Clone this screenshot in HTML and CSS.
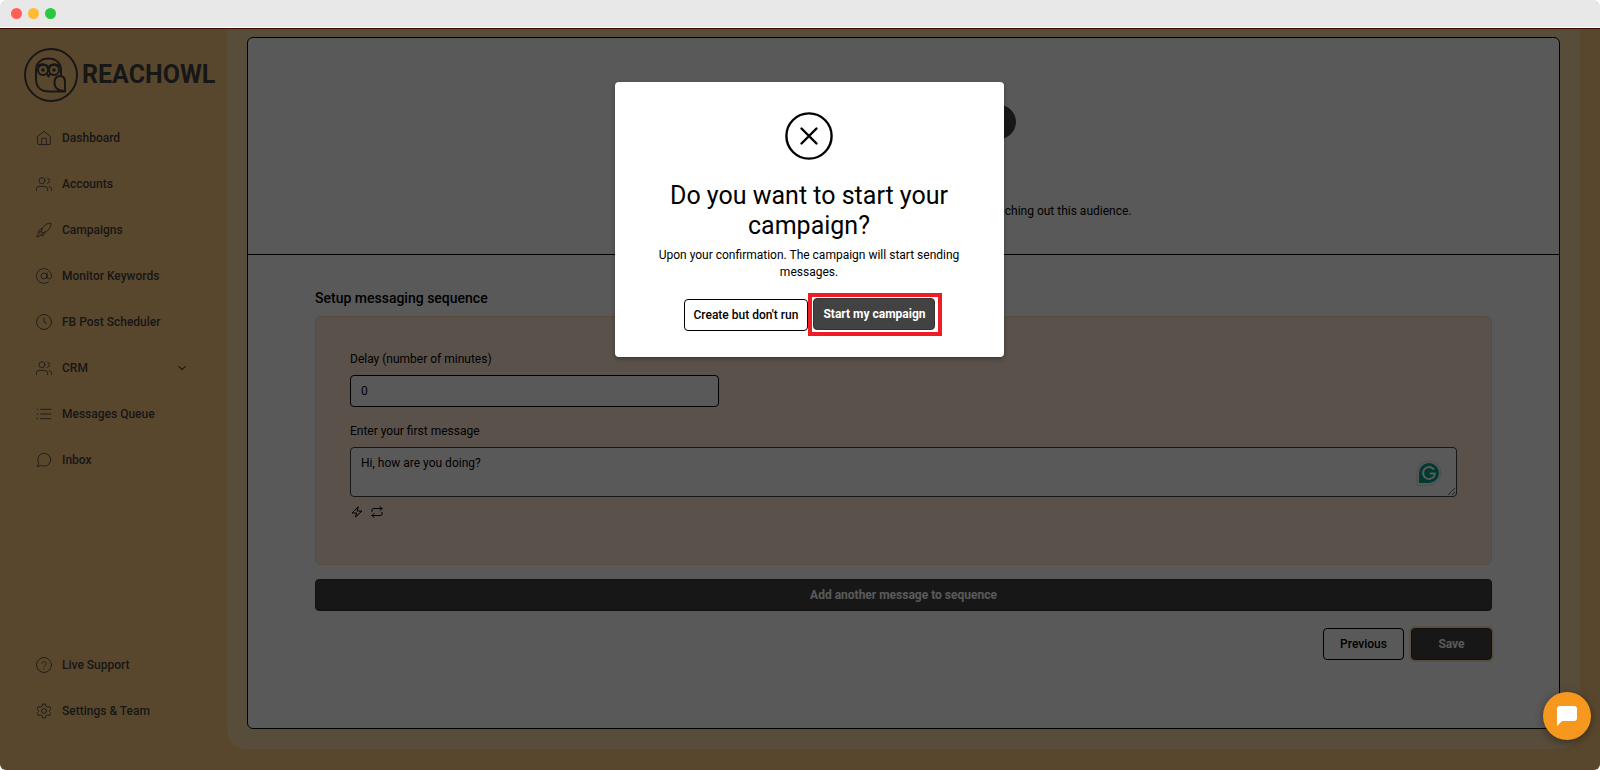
FILE: index.html
```html
<!DOCTYPE html>
<html lang="en">
<head>
    <meta charset="UTF-8">
    <meta name="viewport" content="width=device-width, initial-scale=1.0">
    <title>ReachOwl</title>
    <link rel="stylesheet" href="styles.css">
</head>
<body>
    <div class="window">
        <div class="titlebar">
            <span class="dot red"></span>
            <span class="dot yellow"></span>
            <span class="dot green"></span>
        </div>

        <div class="app">
            <aside class="sidebar">
                <a href="#" class="logo">
                    <svg viewBox="0 0 54 54" width="54" height="54">
                        <circle cx="27" cy="27" r="26"/>
                        <path d="M37 28v-6c0-7-5-11.500-12.500-11.500S12 15 12 22v9c0 8 5 12.500 13 12.500h16V34c0-4-2-6-5-6-4 0-5.500 3-5.500 7 0 5 4 8 10.500 8"/>
                        <path d="M13 18c4-2.500 9-2.500 11.500 1C27 15.500 32 15.500 36 18M23 26l1.500 2.500L26 26"/>
                        <circle cx="19" cy="22" r="5"/>
                        <circle cx="30" cy="22" r="5"/>
                        <circle cx="19" cy="22" r=".8"/>
                        <circle cx="30" cy="22" r=".8"/>
                    </svg>
                    <span>REACHOWL</span>
                </a>
                <nav class="menu">
                    <a href="#"><svg viewBox="0 0 24 24"><path d="M2.500 9.500 12 2l9.500 7.500V20a2 2 0 0 1-2 2h-15a2 2 0 0 1-2-2zM8.500 22v-8.500a1 1 0 0 1 1-1h5a1 1 0 0 1 1 1V22"/></svg>Dashboard</a>
                    <a href="#"><svg viewBox="0 0 24 24"><circle cx="9" cy="7" r="4.500"/><path d="M.5 22v-2a4.500 4.500 0 0 1 4.500-4.500h8a4.500 4.500 0 0 1 4.500 4.500v2M17 2.700a4.500 4.500 0 0 1 0 8.600M20 15.700a4.500 4.500 0 0 1 3.500 4.300v2"/></svg>Accounts</a>
                    <a href="#"><svg viewBox="0 0 24 24"><path d="M8 13.500C10 6 15 2 22.500 1.500 22.500 9 18 14 10.500 16zM9 10.500c-3-.5-5 1.500-6 5l5-1M13.500 15c.5 3-1.500 5-5 6l1-5M5 17c-2.500 1-3 3-3.500 5.500C4 22 6 21.500 7 19"/></svg>Campaigns</a>
                    <a href="#"><svg viewBox="0 0 24 24"><circle cx="12" cy="12" r="4.500"/><path d="M16.500 7.500v5.500a3.300 3.300 0 0 0 6.600 0v-1a11.200 11.200 0 1 0-4.400 8.900"/></svg>Monitor Keywords</a>
                    <a href="#"><svg viewBox="0 0 24 24"><circle cx="12" cy="12" r="11.200"/><path d="M12 5.500V12l4 2"/></svg>FB Post Scheduler</a>
                    <a href="#"><svg viewBox="0 0 24 24"><circle cx="9" cy="7" r="4.500"/><path d="M.5 22v-2a4.500 4.500 0 0 1 4.500-4.500h8a4.500 4.500 0 0 1 4.500 4.500v2M17 2.700a4.500 4.500 0 0 1 0 8.600M20 15.700a4.500 4.500 0 0 1 3.500 4.300v2"/></svg>CRM<svg class="chevron" viewBox="0 0 24 24"><path d="m4 8 8 8 8-8"/></svg></a>
                    <a href="#"><svg viewBox="0 0 24 24"><path d="M7 5h15.500M7 12h15.500M7 19h15.500M1.500 5h1M1.500 12h1M1.500 19h1"/></svg>Messages Queue</a>
                    <a href="#"><svg viewBox="0 0 24 24"><path d="M22 11.500a9.600 9.600 0 0 1-14 8.700L2 22l1.900-5.800A9.600 9.600 0 0 1 12.500 2 9.600 9.600 0 0 1 22 11.500z"/></svg>Inbox</a>
                </nav>
                <nav class="menu menu-bottom">
                    <a href="#"><svg viewBox="0 0 24 24"><circle cx="12" cy="12" r="11.200"/><path d="M8.800 9a3.300 3.300 0 0 1 6.400 1c0 2.200-3.200 2.800-3.200 4.500M12 17.500v.5"/></svg>Live Support</a>
                    <a href="#"><svg viewBox="0 0 24 24"><circle cx="12" cy="12" r="3.600"/><path d="M10 1.500h4l.8 3.200 2.400 1.400 3.200-.9 2 3.500L20 11v2l2.400 2.300-2 3.500-3.200-.9-2.400 1.400-.8 3.200h-4l-.8-3.200-2.400-1.400-3.200.9-2-3.500L4 13v-2L1.600 8.700l2-3.500 3.200.9 2.400-1.400z"/></svg>Settings &amp; Team</a>
                </nav>
            </aside>

            <main class="panel">
                <div class="card">
                    <section class="intro">
                        <div class="steps">
                            <span class="step"></span>
                            <span class="step"></span>
                        </div>
                        <p>reaching out this audience.</p>
                    </section>

                    <form class="sequence">
                        <h2>Setup messaging sequence</h2>
                        <div class="message-box">
                            <label for="delay">Delay (number of minutes)</label>
                            <input type="text" id="delay" value="0">
                            <label for="message">Enter your first message</label>
                            <div class="message-field">
                                <textarea id="message" spellcheck="false">Hi, how are you doing?</textarea>
                                <svg class="grammar" viewBox="0 0 26 26" width="26" height="26">
                                    <path class="bubble" d="M1 25V13A12 12 0 1 1 13 25z"/>
                                    <path class="badge" d="M3 23V13a10 10 0 1 1 10 10z"/>
                                    <path class="mark" d="M17.500 9A6 6 0 1 0 19 13.500h-4.500"/>
                                </svg>
                            </div>
                            <div class="tools">
                                <button type="button" aria-label="Variables"><svg viewBox="0 0 24 24"><path d="M14 2 2 14h9l-2 8L22 10h-9z"/></svg></button>
                                <button type="button" aria-label="Spintax"><svg viewBox="0 0 24 24"><path d="m18 1 4 4-4 4M2 11V8a3 3 0 0 1 3-3h17M6 23l-4-4 4-4M22 13v3a3 3 0 0 1-3 3H2"/></svg></button>
                            </div>
                        </div>
                        <button type="button" class="btn dark wide">Add another message to sequence</button>
                        <div class="actions">
                            <button type="button" class="btn light">Previous</button>
                            <button type="button" class="btn dark focused">Save</button>
                        </div>
                    </form>
                </div>
            </main>

            <div class="overlay">
                <div class="modal" role="dialog" aria-labelledby="modalTitle">
                    <svg class="modal-icon" viewBox="0 0 48 48" width="48" height="48">
                        <circle cx="24" cy="24" r="22.600"/>
                        <path d="m16.500 16.500 15 15M31.500 16.500l-15 15"/>
                    </svg>
                    <h1 id="modalTitle">Do you want to start your campaign?</h1>
                    <p>Upon your confirmation. The campaign will start sending messages.</p>
                    <div class="modal-buttons">
                        <button type="button" class="btn light">Create but don't run</button>
                        <div class="highlight">
                            <button type="button" class="btn dark">Start my campaign</button>
                        </div>
                    </div>
                </div>
            </div>

            <button type="button" class="chat" aria-label="Open chat">
                <svg viewBox="0 0 24 24" width="24" height="24"><path d="M5 2h14a3 3 0 0 1 3 3v9a3 3 0 0 1-3 3H7l-5 5V5a3 3 0 0 1 3-3z"/></svg>
            </button>
        </div>
    </div>
</body>
</html>
```
FILE: styles.css
```css
* {
    box-sizing: border-box;
}
body {
    margin: 0;
    background: #fff;
    font-family: Roboto, "Liberation Sans", sans-serif;
    font-size: 12px;
    color: #000;
}
h1, h2, p {
    margin: 0;
    font-weight: 400;
}
a {
    color: inherit;
    text-decoration: none;
}
svg {
    fill: none;
    stroke: currentColor;
    stroke-linecap: round;
    stroke-linejoin: round;
}
button, input, textarea {
    font: inherit;
    color: inherit;
}
.window {
    display: flex;
    flex-direction: column;
    min-height: 100vh;
    border-radius: 6px;
    overflow: hidden;
}
.titlebar {
    display: flex;
    align-items: center;
    gap: 6px;
    height: 28px;
    padding-left: 11px;
    background: #e8e8e8;
    border-bottom: 1px solid #fff;
}
.dot {
    width: 11px;
    height: 11px;
    border-radius: 50%;
}
.red {
    background: #ff5f57;
}
.yellow {
    background: #febc2e;
}
.green {
    background: #28c840;
}

.app {
    position: relative;
    display: flex;
    flex: 1;
    padding-right: 20px;
    background: #ffcc80;
    border-top: 1px solid #400a00;
}
.sidebar {
    display: flex;
    flex-direction: column;
    width: 227px;
    padding-bottom: 36px;
    color: #424242;
}
.logo {
    display: flex;
    align-items: center;
    gap: 4px;
    padding: 19px 0 0 24px;
    font-size: 25px;
    line-height: 28px;
    font-weight: 700;
}
.logo svg {
    stroke-width: 2;
}
.menu {
    display: flex;
    flex-direction: column;
    padding: 13px 40px 0 36px;
}
.menu a {
    display: flex;
    align-items: center;
    gap: 10px;
    height: 46px;
    font-weight: 500;
}
.menu svg {
    width: 16px;
    height: 16px;
    stroke-width: 1.3;
}
.menu .chevron {
    width: 10px;
    height: 10px;
    margin-left: auto;
    stroke-width: 2.5;
}
.menu-bottom {
    margin-top: auto;
}

.panel {
    flex: 1;
    display: flex;
    margin-bottom: 21px;
    padding: 8px 20px 20px;
    background: #fbd9a8;
    border-radius: 0 0 20px 20px;
}
.card {
    flex: 1;
    background: #fff;
    border: 1px solid #000;
    border-radius: 6px;
}
.intro {
    display: flex;
    flex-direction: column;
    align-items: center;
    height: 217px;
    padding-top: 67px;
    border-bottom: 1px solid #000;
}
.steps {
    display: flex;
    gap: 156px;
}
.step {
    width: 34px;
    height: 34px;
    border-radius: 50%;
    background: #424242;
}
.intro p {
    width: 456px;
    margin-top: 65px;
    text-align: right;
}
.sequence {
    padding: 35px 67px 0;
}
h2 {
    font-size: 14px;
    line-height: 16px;
    font-weight: 500;
}
.message-box {
    display: flex;
    flex-direction: column;
    height: 249px;
    margin: 10px 0 14px;
    padding: 34px;
    background: #ffe8d4;
    border: 1px solid #ffd9a8;
    border-radius: 6px;
}
label {
    margin-bottom: 8px;
    line-height: 16px;
}
.message-box input {
    width: 369px;
    height: 32px;
    margin-bottom: 16px;
    padding: 0 10px;
    background: #fff;
    border: 1px solid #000;
    border-radius: 4px;
}
.message-field {
    position: relative;
    display: flex;
}
textarea {
    flex: 1;
    height: 50px;
    padding: 8px 10px;
    background: #fff;
    border: 1px solid #424242;
    border-radius: 4px;
}
/* grammar badge floats over the textarea */
.grammar {
    position: absolute;
    right: 15px;
    top: 13px;
}
.bubble {
    stroke: #ddd;
    fill: #fff;
}
.badge {
    fill: #00a389;
    stroke: none;
}
.mark {
    stroke: #fff;
    stroke-width: 2;
}
.tools {
    display: flex;
    gap: 8px;
    margin-top: 9px;
    padding-left: 1px;
}
.tools button {
    display: flex;
    padding: 0;
    border: 0;
    background: none;
}
.tools svg {
    width: 12px;
    height: 12px;
    stroke-width: 2;
}

.btn {
    height: 32px;
    padding: 0 10px;
    border: 1px solid #000;
    border-radius: 4px;
    font-weight: 500;
    white-space: nowrap;
    cursor: pointer;
}
.light {
    background: #fff;
}
.dark {
    background: #424242;
    border-color: #333;
    color: #fff;
    font-weight: 700;
}
.wide {
    width: 100%;
    display: block;
}
.actions {
    display: flex;
    justify-content: flex-end;
    gap: 7px;
    margin-top: 17px;
}
.actions .btn {
    width: 81px;
}
.focused {
    box-shadow: 0 0 0 2px #ffdfb5;
}

.overlay {
    position: absolute;
    inset: 0;
    display: flex;
    justify-content: center;
    align-items: flex-start;
    padding: 53px 0 0 18px;
    background: rgba(0, 0, 0, 0.65);
}
.modal {
    width: 389px;
    padding: 30px 40px 21px;
    background: #fff;
    border-radius: 4px;
    text-align: center;
    box-shadow: 0 2px 4px rgba(0, 0, 0, 0.3);
}
.modal-icon {
    display: block;
    margin: 0 auto 21px;
    stroke-width: 2.4;
}
.modal h1 {
    font-size: 25px;
    line-height: 30px;
}
.modal p {
    margin: 6px 0 12px;
    line-height: 17px;
}
.modal-buttons {
    display: flex;
    justify-content: center;
    align-items: center;
    padding-left: 8px;
}
.modal-buttons .btn {
    padding: 0 9px;
}
.highlight {
    padding: 1px 3px 2px 1px;
    border: 4px solid #ee1c25;
}
.chat {
    position: absolute;
    right: 9px;
    bottom: 30px;
    display: flex;
    justify-content: center;
    align-items: center;
    width: 48px;
    height: 48px;
    padding: 0;
    border: 0;
    border-radius: 50%;
    background: #f5981d;
    box-shadow: 0 2px 8px rgba(0, 0, 0, 0.4);
}
.chat svg {
    fill: #fff;
    stroke: none;
}
```
